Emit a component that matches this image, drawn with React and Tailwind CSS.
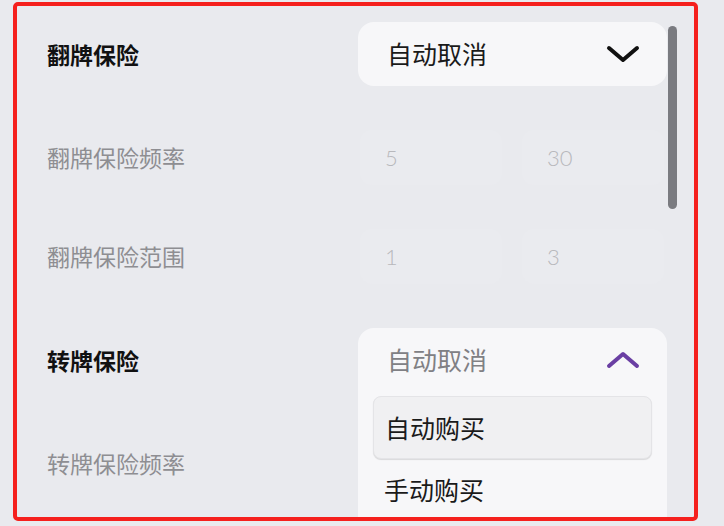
import { useState } from "react";

const cjk = { fontFamily: '"Noto Sans CJK SC", "Noto Sans", sans-serif' };

function Chevron({ up, color }) {
    return (
        <svg width="34" height="18" viewBox="0 0 34 18" fill="none">
            <path
                d={up ? "M3 15 L17 3 L31 15" : "M3 3 L17 15 L31 3"}
                stroke={color}
                strokeWidth="4"
                strokeLinecap="round"
                strokeLinejoin="round"
            />
        </svg>
    );
}

function NumBox({ value }) {
    return (
        <div className="flex-1 h-full rounded-xl bg-[#eaebef] flex items-center pl-[25px]">
            <span className="text-[22px] font-light text-[#b8b8bc]" style={{ fontFamily: 'Lato, "Noto Sans", sans-serif' }}>{value}</span>
        </div>
    );
}

export default function App() {
    const [open] = useState(true);

    return (
        <div className="w-[724px] h-[526px] bg-[#e9eaee] pt-[2px] pl-[13px]" style={cjk}>
            <div className="relative w-[685px] h-[519px] border-4 border-[#f5201d] rounded-[5px] overflow-hidden pt-4 pl-[30px]">
                <div className="absolute left-[651px] top-[20px] w-[9px] h-[183px] rounded-full bg-[#7a7b80]"></div>

                <div className="flex flex-col gap-[44px]">
                    <div className="flex h-[64px] items-center">
                        <div className="w-[311px] text-[23px] font-bold text-[#111]">翻牌保险</div>
                        <div className="w-[309px] h-full rounded-2xl bg-[#f7f7f9] flex items-center justify-between pl-[29px] pr-[27px]">
                            <span className="text-[25px] text-[#1a1a1a]">自动取消</span>
                            <Chevron color="#111" />
                        </div>
                    </div>

                    <div className="flex h-[55px] items-center">
                        <div className="w-[313px] text-[23px] text-[#8e8e92]">翻牌保险频率</div>
                        <div className="w-[304px] h-full flex gap-5">
                            <NumBox value="5" />
                            <NumBox value="30" />
                        </div>
                    </div>

                    <div className="flex h-[55px] items-center">
                        <div className="w-[313px] text-[23px] text-[#8e8e92]">翻牌保险范围</div>
                        <div className="w-[304px] h-full flex gap-5">
                            <NumBox value="1" />
                            <NumBox value="3" />
                        </div>
                    </div>

                    <div className="flex h-[64px] items-center">
                        <div className="w-[311px] text-[23px] font-bold text-[#111]">转牌保险</div>
                        <div className="relative w-[309px] h-full">
                            <div className="absolute left-0 top-0 w-full rounded-2xl bg-[#f7f7f9] z-10">
                                <div className="h-[64px] flex items-center justify-between pl-[29px] pr-[27px]">
                                    <span className="text-[25px] text-[#808084]">自动取消</span>
                                    <Chevron up color="#6a3fa3" />
                                </div>
                                {open && (
                                    <div className="flex flex-col px-[15px] pt-1 pb-4">
                                        <div className="h-[63px] rounded-lg bg-[#f0f0f2] border border-[#e4e4e7] shadow-[0_1px_1px_rgba(0,0,0,0.12)] flex items-center pl-[11px]">
                                            <span className="text-[25px] text-[#1a1a1a]">自动购买</span>
                                        </div>
                                        <div className="h-[62px] flex items-center pl-[11px]">
                                            <span className="text-[25px] text-[#1a1a1a]">手动购买</span>
                                        </div>
                                    </div>
                                )}
                            </div>
                        </div>
                    </div>

                    <div className="flex h-[55px] items-center">
                        <div className="w-[313px] text-[23px] text-[#8e8e92]">转牌保险频率</div>
                    </div>
                </div>
            </div>
        </div>
    );
}
